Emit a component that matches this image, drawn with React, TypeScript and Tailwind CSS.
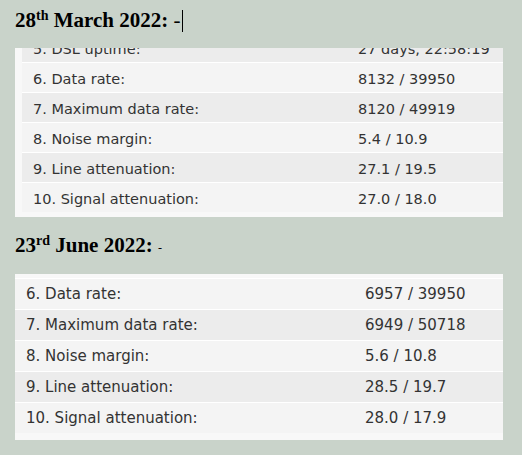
import React from "react";

const rows1: [string, string][] = [
  ["5. DSL uptime:", "27 days, 22:58:19"],
  ["6. Data rate:", "8132 / 39950"],
  ["7. Maximum data rate:", "8120 / 49919"],
  ["8. Noise margin:", "5.4 / 10.9"],
  ["9. Line attenuation:", "27.1 / 19.5"],
  ["10. Signal attenuation:", "27.0 / 18.0"],
];

const rows2: [string, string][] = [
  ["6. Data rate:", "6957 / 39950"],
  ["7. Maximum data rate:", "6949 / 50718"],
  ["8. Noise margin:", "5.6 / 10.8"],
  ["9. Line attenuation:", "28.5 / 19.7"],
  ["10. Signal attenuation:", "28.0 / 17.9"],
];

const sans = { fontFamily: '"DejaVu Sans", Verdana, sans-serif' };
const serif = { fontFamily: '"Liberation Serif", "Times New Roman", serif' };

export default function App() {
  return (
    <div className="w-[522px] h-[455px] bg-[#c9d3ca] overflow-hidden">
      <div className="pl-[15px] w-[503px]">
        {/* Heading 1 */}
        <div className="h-[48px] pt-[8px]" style={serif}>
          <div className="text-[21px] leading-[24px] font-bold text-black whitespace-nowrap">
            28<sup className="text-[14px] font-bold">th</sup> March 2022:{" "}
            <span className="font-normal">-</span>
            <span className="inline-block w-px h-[22px] bg-black align-[-5px] ml-[2px]" />
          </div>
        </div>

        {/* Panel 1 */}
        <div className="h-[169px] overflow-hidden bg-[#f8f8f8] pl-[7px]" style={sans}>
          <div className="mt-[-16px]">
            {rows1.map(([l, v], i) => (
              <div
                key={l}
                className={
                  "h-[30px] flex items-center pt-[5px] pl-[11px] text-[14.5px] text-[#333] border-t border-white " +
                  (i % 2 === 0 ? "bg-[#ececec]" : "bg-[#f4f4f4]")
                }
              >
                <div className="w-[325px] shrink-0 whitespace-nowrap">{l}</div>
                <div className="whitespace-nowrap">{v}</div>
              </div>
            ))}
          </div>
        </div>

        {/* Heading 2 */}
        <div className="h-[57px] pt-[16px]" style={serif}>
          <div className="text-[21px] leading-[24px] font-bold text-black whitespace-nowrap">
            23<sup className="text-[14px] font-bold">rd</sup> June 2022:{" "}
            <span className="font-normal text-[12px]">-</span>
          </div>
        </div>

        {/* Panel 2 */}
        <div className="h-[166px] bg-[#f8f8f8] pt-[4px]" style={sans}>
          {rows2.map(([l, v], i) => (
            <div
              key={l}
              className={
                "h-[31px] flex items-center pt-[0px] pl-[11px] text-[15px] text-[#333] border-t border-white " +
                (i % 2 === 0 ? "bg-[#f4f4f4]" : "bg-[#ececec]")
              }
            >
              <div className="w-[339px] shrink-0 whitespace-nowrap">{l}</div>
              <div className="whitespace-nowrap">{v}</div>
            </div>
          ))}
        </div>
      </div>
    </div>
  );
}
